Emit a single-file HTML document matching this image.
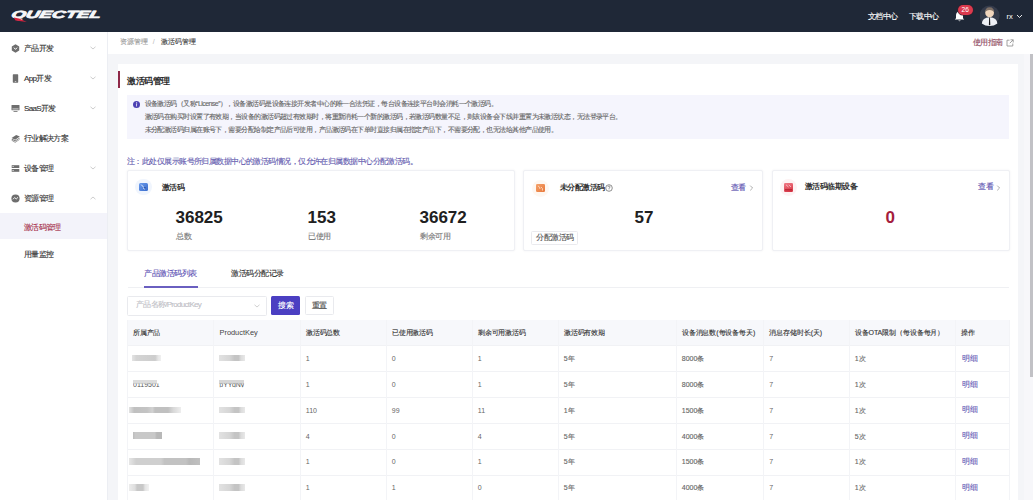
<!DOCTYPE html>
<html><head><meta charset="utf-8">
<style>
*{box-sizing:border-box;margin:0;padding:0}
html,body{width:1033px;height:500px;overflow:hidden}
body{position:relative;background:#f4f5f8;font-family:"Liberation Sans",sans-serif;color:#333;line-height:1}
.a{position:absolute}
.t{position:absolute;white-space:nowrap;line-height:1;transform:translateY(-50%)}
.c{-webkit-text-stroke:0.12px currentColor}
</style></head><body>
<div class="a" style="left:0px;top:0px;width:1033px;height:32px;background:#1f2837;"></div>
<svg class="a" style="left:0;top:0" width="120" height="32" viewBox="0 0 120 32">
  <g transform="translate(0,18.1) skewX(-14) translate(0,-18.1)">
  <text x="10.8" y="18.1" font-family="Liberation Sans" font-weight="bold" font-style="italic" font-size="10.4" textLength="89.5" lengthAdjust="spacingAndGlyphs" fill="#f6f7f9" stroke="#f6f7f9" stroke-width="0.75" stroke-linejoin="round">QUECTEL</text>
  </g>
  <path d="M13.8 17.4 L19 18.4 L26.8 21.9 L15.5 20.4 Z" fill="#d8243f"/>
</svg>
<div class="t c" style="left:867.5px;top:17.3px;color:#fff;font-size:8px;letter-spacing:-0.40px;">文档中心</div>
<div class="t c" style="left:908.5px;top:17.3px;color:#fff;font-size:8px;letter-spacing:-0.40px;">下载中心</div>
<svg class="a" style="left:953px;top:10px" width="13" height="13" viewBox="0 0 13 13">
  <path d="M6.5 1.5 C4 1.5 3 3.5 3 5.5 L3 8.2 L1.8 9.6 L11.2 9.6 L10 8.2 L10 5.5 C10 3.5 9 1.5 6.5 1.5Z" fill="#fff"/>
  <path d="M5.2 10.4 Q6.5 12 7.8 10.4Z" fill="#fff"/>
</svg>
<div class="a" style="left:957.6px;top:4.9px;width:15.2px;height:10px;background:#dc3a4e;border-radius:5px;box-shadow:0 0 0 0.6px #3a1e2a"></div>
<div class="t" style="left:961.6px;top:10.4px;color:#fff;font-size:6.6px;">26</div>
<svg class="a" style="left:980px;top:5px" width="20" height="21" viewBox="0 0 20 21">
  <circle cx="9.6" cy="10.5" r="10" fill="#343b4b"/>
  <path d="M1.8 18.5 Q2.2 12.8 9.6 12.2 Q17 12.8 17.4 18.5 Q14 21 9.6 21 Q5.2 21 1.8 18.5Z" fill="#eef0f5"/>
  <ellipse cx="9.6" cy="7.8" rx="4.4" ry="4.6" fill="#f1d6bd"/>
  <path d="M5.1 7.6 Q5 2.4 9.6 2.3 Q14.2 2.4 14.1 7.6 Q13.2 5 9.6 4.9 Q6 5 5.1 7.6Z" fill="#7d6f66"/>
  <path d="M9.2 12.6 L10 12.6 L10.3 19.4 L9.6 20.5 L8.9 19.4Z" fill="#15161a"/>
</svg>
<div class="t" style="left:1006.5px;top:16.5px;color:#fff;font-size:7.5px;">rx</div>
<svg class="a" style="left:1015.5px;top:14px" width="7" height="5" viewBox="0 0 7 5"><path d="M1 1 L3.5 3.5 L6 1" stroke="#fff" stroke-width="0.9" fill="none"/></svg>
<div class="a" style="left:0px;top:32px;width:107px;height:468px;background:#fff;"></div>
<div class="a" style="left:107px;top:32px;width:1px;height:468px;background:#eceef3;"></div>
<svg class="a" style="left:11px;top:43.5px" width="9" height="9" viewBox="0 0 9 9"><path d="M4.5 0.3 L8.2 2.4 L8.2 6.6 L4.5 8.7 L0.8 6.6 L0.8 2.4Z" fill="#6e6e6e"/><path d="M2.9 3.6 L4.5 5.4 L6.1 3.6" stroke="#fff" stroke-width="1" fill="none"/></svg>
<div class="t c" style="left:24px;top:48.8px;color:#333;font-size:8px;letter-spacing:-0.65px;">产品开发</div>
<svg class="a" style="left:89.5px;top:46px" width="6" height="4" viewBox="0 0 6 4"><path d="M0.5 0.8 L3 3 L5.5 0.8" stroke="#b8b8b8" stroke-width="0.7" fill="none"/></svg>
<svg class="a" style="left:11px;top:73.5px" width="9" height="9" viewBox="0 0 9 9"><rect x="1.8" y="0.3" width="5.4" height="8.4" rx="0.6" fill="#6e6e6e"/><rect x="3.8" y="7.2" width="1.4" height="0.6" fill="#fff"/></svg>
<div class="t c" style="left:24px;top:78.8px;color:#333;font-size:8px;letter-spacing:-0.65px;">App开发</div>
<svg class="a" style="left:89.5px;top:76px" width="6" height="4" viewBox="0 0 6 4"><path d="M0.5 0.8 L3 3 L5.5 0.8" stroke="#b8b8b8" stroke-width="0.7" fill="none"/></svg>
<svg class="a" style="left:11px;top:103.5px" width="9" height="9" viewBox="0 0 9 9"><rect x="0.5" y="1" width="8" height="5.2" rx="0.5" fill="#6e6e6e"/><rect x="1.4" y="4.6" width="6.2" height="0.7" fill="#fff"/><rect x="2.5" y="7" width="4" height="1" fill="#8a8a8a"/></svg>
<div class="t c" style="left:24px;top:108.8px;color:#333;font-size:8px;letter-spacing:-0.65px;">SaaS开发</div>
<svg class="a" style="left:89.5px;top:106px" width="6" height="4" viewBox="0 0 6 4"><path d="M0.5 0.8 L3 3 L5.5 0.8" stroke="#b8b8b8" stroke-width="0.7" fill="none"/></svg>
<svg class="a" style="left:11px;top:133.5px" width="9" height="9" viewBox="0 0 9 9"><path d="M0.6 4 L5.2 0.9 L8.8 2.6 L4.2 5.7Z" fill="#6e6e6e"/><path d="M0.4 5.2 L1.2 4.7 L4.2 6.5 L8.4 3.7 L9 4.1 L4.2 7.6Z" fill="#6e6e6e"/><path d="M0.4 6.6 L1.1 6.1 L4.2 7.9 L8.3 5.2 L8.9 5.6 L4.2 8.8Z" fill="#888"/></svg>
<div class="t c" style="left:24px;top:138.8px;color:#333;font-size:8px;letter-spacing:-0.65px;">行业解决方案</div>
<svg class="a" style="left:11px;top:163.5px" width="9" height="9" viewBox="0 0 9 9"><rect x="0.7" y="1.2" width="7.6" height="2.8" fill="#6e6e6e"/><rect x="0.7" y="5" width="7.6" height="2.8" fill="#6e6e6e"/><rect x="1.5" y="2.2" width="1.2" height="0.8" fill="#fff"/><rect x="1.5" y="6" width="1.2" height="0.8" fill="#fff"/></svg>
<div class="t c" style="left:24px;top:168.8px;color:#333;font-size:8px;letter-spacing:-0.65px;">设备管理</div>
<svg class="a" style="left:89.5px;top:166px" width="6" height="4" viewBox="0 0 6 4"><path d="M0.5 0.8 L3 3 L5.5 0.8" stroke="#b8b8b8" stroke-width="0.7" fill="none"/></svg>
<svg class="a" style="left:11px;top:193.5px" width="9" height="9" viewBox="0 0 9 9"><circle cx="4.5" cy="4.5" r="4.1" fill="#6e6e6e"/><path d="M2 5.3 L3.6 3.5 L5.2 5 L7 3.3" stroke="#fff" stroke-width="0.9" fill="none"/></svg>
<div class="t c" style="left:24px;top:198.8px;color:#333;font-size:8px;letter-spacing:-0.65px;">资源管理</div>
<svg class="a" style="left:89.5px;top:196px" width="6" height="4" viewBox="0 0 6 4"><path d="M0.5 3.2 L3 1 L5.5 3.2" stroke="#b8b8b8" stroke-width="0.7" fill="none"/></svg>
<div class="a" style="left:0px;top:213px;width:107px;height:26px;background:#f3f3fa;"></div>
<div class="t c" style="left:24px;top:227.8px;color:#a6304a;font-size:8px;letter-spacing:-0.65px;">激活码管理</div>
<div class="t c" style="left:24px;top:255.3px;color:#333;font-size:8px;letter-spacing:-0.65px;">用量监控</div>
<div class="a" style="left:108px;top:32px;width:925px;height:22px;background:#fff;"></div>
<div class="t c" style="left:119.7px;top:41.4px;color:#9a9a9a;font-size:7px;letter-spacing:0.00px;">资源管理</div>
<div class="t" style="left:152.8px;top:41.4px;color:#b5b5b5;font-size:7.0px;">/</div>
<div class="t c" style="left:161px;top:41.4px;color:#444;font-size:7px;letter-spacing:0.00px;">激活码管理</div>
<div class="t c" style="left:973px;top:42.6px;color:#8f4a62;font-size:8px;letter-spacing:-0.70px;">使用指南</div>
<svg class="a" style="left:1006px;top:38.5px" width="8" height="8" viewBox="0 0 8 8"><path d="M3.5 1.2 L1 1.2 L1 7 L6.8 7 L6.8 4.5" stroke="#8a8a8a" stroke-width="0.8" fill="none"/><path d="M4.5 0.8 L7.2 0.8 L7.2 3.5 M7.2 0.8 L3.8 4.2" stroke="#8a8a8a" stroke-width="0.8" fill="none"/></svg>
<div class="a" style="left:1024.2px;top:54px;width:8.8px;height:446px;background:#f7f7fa;"></div>
<div class="a" style="left:1030px;top:54px;width:3px;height:323px;background:#c1c1c5;"></div>
<div class="a" style="left:118px;top:64px;width:900.3px;height:440px;background:#fff;"></div>
<div class="a" style="left:118px;top:71px;width:2px;height:17px;background:#8e2848;"></div>
<div class="t" style="left:127px;top:80.5px;color:#2b2b2b;font-weight:bold;font-size:9px;letter-spacing:-0.40px;">激活码管理</div>
<div class="a" style="left:127px;top:95px;width:882px;height:44px;background:#f5f5fd;"></div>
<div class="a" style="left:133px;top:100.5px;width:7px;height:7px;border-radius:50%;background:#4d42b3"></div>
<svg class="a" style="left:133px;top:100.5px" width="7" height="7" viewBox="0 0 7 7"><circle cx="3.6" cy="1.9" r="0.6" fill="#fff"/><path d="M3.3 3 L4.1 3 L3.7 5.5 L3 5.5Z" fill="#fff"/></svg>
<div class="t c" style="left:144.5px;top:103.3px;color:#666;font-size:7px;letter-spacing:-0.55px;">设备激活码（又称“License”），设备激活码是设备连接开发者中心的唯一合法凭证，每台设备连接平台时会消耗一个激活码。</div>
<div class="t c" style="left:144.5px;top:116.1px;color:#666;font-size:7px;letter-spacing:-0.55px;">激活码在购买时设置了有效期，当设备的激活码超过有效期时，将重新消耗一个新的激活码，若激活码数量不足，则该设备会下线并重置为未激活状态，无法登录平台。</div>
<div class="t c" style="left:144.5px;top:128.8px;color:#666;font-size:7px;letter-spacing:-0.55px;">未分配激活码归属在账号下，需要分配给制定产品后可使用，产品激活码在下单时直接归属在指定产品下，不需要分配，也无法给其他产品使用。</div>
<div class="t c" style="left:127px;top:162px;color:#665db0;font-size:8px;letter-spacing:-0.56px;">注：此处仅展示账号所归属数据中心的激活码情况，仅允许在归属数据中心分配激活码。</div>
<div class="a" style="left:127px;top:170px;width:388px;height:81px;background:#fff;border:1px solid #eff0f4;border-radius:2px;box-shadow:0 0 2.5px rgba(20,30,60,0.06)"></div>
<div class="a" style="left:135.3px;top:178.7px;width:16.7px;height:16.7px;background:#f0f5fd;border-radius:50%"></div>
<div class="a" style="left:139.1px;top:182.9px;width:9px;height:8.6px;background:linear-gradient(135deg,#6a9bec,#3a6ccc);border-radius:1.5px"></div>
<svg class="a" style="left:139.1px;top:182.9px" width="9" height="8.6" viewBox="0 0 9 8.6"><path d="M2.2 1.6 L4.6 4.2 M4 4.8 L5.8 6.2" stroke="#dfe9fb" stroke-width="1" fill="none"/><circle cx="5.9" cy="4.8" r="0.7" fill="#1f3f8a"/></svg>
<div class="t" style="left:161.5px;top:187.7px;color:#333;font-weight:bold;font-size:8px;letter-spacing:-0.50px;">激活码</div>
<div class="t" style="left:175.5px;top:216.7px;color:#202020;font-weight:bold;font-size:17px;">36825</div>
<div class="t c" style="left:176px;top:236.6px;color:#777;font-size:8px;letter-spacing:-0.50px;">总数</div>
<div class="t" style="left:307.5px;top:216.7px;color:#202020;font-weight:bold;font-size:17px;">153</div>
<div class="t c" style="left:308px;top:236.6px;color:#777;font-size:8px;letter-spacing:-0.50px;">已使用</div>
<div class="t" style="left:419.5px;top:216.7px;color:#202020;font-weight:bold;font-size:17px;">36672</div>
<div class="t c" style="left:420px;top:236.6px;color:#777;font-size:8px;letter-spacing:-0.50px;">剩余可用</div>
<div class="a" style="left:523px;top:170px;width:239.5px;height:81px;background:#fff;border:1px solid #eff0f4;border-radius:2px;box-shadow:0 0 2.5px rgba(20,30,60,0.06)"></div>
<div class="a" style="left:532px;top:179.5px;width:17px;height:17px;background:#fef7f1;border-radius:50%"></div>
<div class="a" style="left:536.1px;top:183.5px;width:8.9px;height:8.5px;background:linear-gradient(135deg,#f5a26a,#e8773a);border-radius:1.2px"></div>
<svg class="a" style="left:536.1px;top:183.5px" width="9" height="8.5" viewBox="0 0 9 8.5"><path d="M2 2 Q4 2.5 4 5 M5 3 Q7 4 6.5 6.5" stroke="#fcd9bf" stroke-width="0.9" fill="none"/></svg>
<div class="t" style="left:559.5px;top:188.2px;color:#333;font-weight:bold;font-size:8px;letter-spacing:-0.50px;">未分配激活码</div>
<svg class="a" style="left:604.5px;top:184px" width="8" height="8" viewBox="0 0 8 8"><circle cx="4" cy="4" r="3.3" stroke="#555" stroke-width="0.65" fill="none"/><path d="M2.9 3.1 Q2.9 2 4 2 Q5.1 2 5.1 3 Q5.1 3.7 4 4.2 L4 4.9" stroke="#555" stroke-width="0.6" fill="none"/><circle cx="4" cy="5.8" r="0.35" fill="#666"/></svg>
<div class="t c" style="left:730.5px;top:188px;color:#5b50b0;font-size:8px;letter-spacing:-0.50px;">查看</div>
<svg class="a" style="left:748.5px;top:185px" width="5" height="6" viewBox="0 0 5 6"><path d="M1.2 0.6 L3.6 3 L1.2 5.4" stroke="#999" stroke-width="0.8" fill="none"/></svg>
<div class="t" style="left:634.5px;top:216.7px;color:#202020;font-weight:bold;font-size:17px;">57</div>
<div class="a" style="left:530.8px;top:231.2px;width:47px;height:14.2px;background:#fff;border:1px solid #eaeaee;border-radius:1.5px"></div>
<div class="t c" style="left:536px;top:238.4px;color:#555;font-size:8px;letter-spacing:-0.50px;">分配激活码</div>
<div class="a" style="left:771.5px;top:170px;width:238.5px;height:81px;background:#fff;border:1px solid #eff0f4;border-radius:2px;box-shadow:0 0 2.5px rgba(20,30,60,0.06)"></div>
<div class="a" style="left:779.8px;top:179px;width:17px;height:17px;background:#fdf2f3;border-radius:50%"></div>
<div class="a" style="left:783.8px;top:183.2px;width:9px;height:8.4px;background:linear-gradient(160deg,#f07a86,#d4303f);border-radius:1.2px"></div>
<svg class="a" style="left:783.8px;top:183.2px" width="9" height="8.4" viewBox="0 0 9 8.4"><path d="M2 1.8 L4.5 4 M5 1.8 L7 4" stroke="#fbd0d5" stroke-width="0.8" fill="none"/><rect x="1" y="6.2" width="7" height="1.2" fill="#b8202e"/></svg>
<div class="t" style="left:804.5px;top:187.2px;color:#333;font-weight:bold;font-size:8px;letter-spacing:-0.50px;">激活码临期设备</div>
<div class="t c" style="left:978px;top:187.4px;color:#5b50b0;font-size:8px;letter-spacing:-0.50px;">查看</div>
<svg class="a" style="left:996px;top:184.5px" width="5" height="6" viewBox="0 0 5 6"><path d="M1.2 0.6 L3.6 3 L1.2 5.4" stroke="#999" stroke-width="0.8" fill="none"/></svg>
<div class="t" style="left:885.5px;top:216.7px;color:#a51d3d;font-weight:bold;font-size:17px;">0</div>
<div class="a" style="left:127.5px;top:286.6px;width:881px;height:1px;background:#eff0f3;"></div>
<div class="t c" style="left:144px;top:273.8px;color:#5b50b3;font-size:8px;letter-spacing:-0.50px;">产品激活码列表</div>
<div class="a" style="left:144px;top:285.8px;width:53.5px;height:1.8px;background:#6a5fc0;"></div>
<div class="t c" style="left:231.3px;top:273.8px;color:#333;font-size:8px;letter-spacing:-0.50px;">激活码分配记录</div>
<div class="a" style="left:127.3px;top:296px;width:139.5px;height:19.5px;background:#fff;border:1px solid #e9eaee;border-radius:1.5px"></div>
<div class="t c" style="left:136px;top:304.6px;color:#c0c0c6;font-size:8px;letter-spacing:-0.70px;">产品名称/ProductKey</div>
<svg class="a" style="left:254px;top:303.5px" width="6" height="4" viewBox="0 0 6 4"><path d="M0.5 0.8 L3 3 L5.5 0.8" stroke="#bbb" stroke-width="0.7" fill="none"/></svg>
<div class="a" style="left:271px;top:296.3px;width:29px;height:19px;background:#4b3fc2;border-radius:1.5px"></div>
<div class="t c" style="left:278.3px;top:305.8px;color:#fff;font-size:8px;letter-spacing:-0.50px;">搜索</div>
<div class="a" style="left:304.5px;top:296.3px;width:29px;height:19px;background:#fff;border:1px solid #e9eaee;border-radius:1.5px"></div>
<div class="t c" style="left:311.5px;top:305.8px;color:#444;font-size:8px;letter-spacing:-0.50px;">重置</div>
<div class="a" style="left:127px;top:319.5px;width:882.5px;height:26.2px;background:#f7f8fb;"></div>
<div class="a" style="left:127px;top:345.2px;width:882.5px;height:1px;background:#f1f2f5;"></div>
<div class="a" style="left:127px;top:371.1px;width:882.5px;height:1px;background:#f1f2f5;"></div>
<div class="a" style="left:127px;top:397.0px;width:882.5px;height:1px;background:#f1f2f5;"></div>
<div class="a" style="left:127px;top:422.9px;width:882.5px;height:1px;background:#f1f2f5;"></div>
<div class="a" style="left:127px;top:448.8px;width:882.5px;height:1px;background:#f1f2f5;"></div>
<div class="a" style="left:127px;top:474.7px;width:882.5px;height:1px;background:#f1f2f5;"></div>
<div class="a" style="left:127px;top:500.6px;width:882.5px;height:1px;background:#f1f2f5;"></div>
<div class="a" style="left:126.5px;top:319.5px;width:1px;height:200px;background:#f3f4f7;"></div>
<div class="a" style="left:212.5px;top:319.5px;width:1px;height:200px;background:#f3f4f7;"></div>
<div class="a" style="left:299.5px;top:319.5px;width:1px;height:200px;background:#f3f4f7;"></div>
<div class="a" style="left:385.5px;top:319.5px;width:1px;height:200px;background:#f3f4f7;"></div>
<div class="a" style="left:471.5px;top:319.5px;width:1px;height:200px;background:#f3f4f7;"></div>
<div class="a" style="left:557.5px;top:319.5px;width:1px;height:200px;background:#f3f4f7;"></div>
<div class="a" style="left:675.5px;top:319.5px;width:1px;height:200px;background:#f3f4f7;"></div>
<div class="a" style="left:763.0px;top:319.5px;width:1px;height:200px;background:#f3f4f7;"></div>
<div class="a" style="left:848.5px;top:319.5px;width:1px;height:200px;background:#f3f4f7;"></div>
<div class="a" style="left:955.0px;top:319.5px;width:1px;height:200px;background:#f3f4f7;"></div>
<div class="a" style="left:1009.0px;top:319.5px;width:1px;height:200px;background:#f3f4f7;"></div>
<div class="t c" style="left:132.8px;top:331.8px;color:#333;font-size:7px;letter-spacing:-0.10px;">所属产品</div>
<div class="t" style="left:219.5px;top:333.0px;color:#444;font-size:7.4px;">ProductKey</div>
<div class="t c" style="left:305.8px;top:331.8px;color:#333;font-size:7px;letter-spacing:-0.10px;">激活码总数</div>
<div class="t c" style="left:391.8px;top:331.8px;color:#333;font-size:7px;letter-spacing:-0.10px;">已使用激活码</div>
<div class="t c" style="left:477.8px;top:331.8px;color:#333;font-size:7px;letter-spacing:-0.10px;">剩余可用激活码</div>
<div class="t c" style="left:563.8px;top:331.8px;color:#333;font-size:7px;letter-spacing:-0.10px;">激活码有效期</div>
<div class="t c" style="left:681.8px;top:331.8px;color:#333;font-size:7px;letter-spacing:-0.10px;">设备消息数(每设备每天)</div>
<div class="t c" style="left:769.3px;top:331.8px;color:#333;font-size:7px;letter-spacing:-0.10px;">消息存储时长(天)</div>
<div class="t c" style="left:854.8px;top:331.8px;color:#333;font-size:7px;letter-spacing:-0.10px;">设备OTA限制（每设备每月）</div>
<div class="t c" style="left:961.3px;top:331.8px;color:#333;font-size:7px;letter-spacing:-0.10px;">操作</div>
<div class="t" style="left:305.8px;top:357.8px;color:#666;font-size:7.0px;">1</div>
<div class="t" style="left:391.8px;top:357.8px;color:#666;font-size:7.0px;">0</div>
<div class="t" style="left:477.8px;top:357.8px;color:#666;font-size:7.0px;">1</div>
<div class="t c" style="left:563.8px;top:357.8px;color:#666;font-size:7px;letter-spacing:0.00px;">5年</div>
<div class="t c" style="left:681.8px;top:357.8px;color:#666;font-size:7px;letter-spacing:0.00px;">8000条</div>
<div class="t" style="left:769.3px;top:357.8px;color:#666;font-size:7.0px;">7</div>
<div class="t c" style="left:854.8px;top:357.8px;color:#666;font-size:7px;letter-spacing:0.00px;">1次</div>
<div class="t c" style="left:962.3px;top:358.6px;color:#6a5fb8;font-size:8px;letter-spacing:-0.40px;">明细</div>
<div class="t" style="left:305.8px;top:383.7px;color:#666;font-size:7.0px;">1</div>
<div class="t" style="left:391.8px;top:383.7px;color:#666;font-size:7.0px;">0</div>
<div class="t" style="left:477.8px;top:383.7px;color:#666;font-size:7.0px;">1</div>
<div class="t c" style="left:563.8px;top:383.7px;color:#666;font-size:7px;letter-spacing:0.00px;">5年</div>
<div class="t c" style="left:681.8px;top:383.7px;color:#666;font-size:7px;letter-spacing:0.00px;">8000条</div>
<div class="t" style="left:769.3px;top:383.7px;color:#666;font-size:7.0px;">7</div>
<div class="t c" style="left:854.8px;top:383.7px;color:#666;font-size:7px;letter-spacing:0.00px;">1次</div>
<div class="t c" style="left:962.3px;top:384.5px;color:#6a5fb8;font-size:8px;letter-spacing:-0.40px;">明细</div>
<div class="t" style="left:305.8px;top:409.6px;color:#666;font-size:7.0px;">110</div>
<div class="t" style="left:391.8px;top:409.6px;color:#666;font-size:7.0px;">99</div>
<div class="t" style="left:477.8px;top:409.6px;color:#666;font-size:7.0px;">11</div>
<div class="t c" style="left:563.8px;top:409.6px;color:#666;font-size:7px;letter-spacing:0.00px;">1年</div>
<div class="t c" style="left:681.8px;top:409.6px;color:#666;font-size:7px;letter-spacing:0.00px;">1500条</div>
<div class="t" style="left:769.3px;top:409.6px;color:#666;font-size:7.0px;">7</div>
<div class="t c" style="left:854.8px;top:409.6px;color:#666;font-size:7px;letter-spacing:0.00px;">1次</div>
<div class="t c" style="left:962.3px;top:410.4px;color:#6a5fb8;font-size:8px;letter-spacing:-0.40px;">明细</div>
<div class="t" style="left:305.8px;top:435.5px;color:#666;font-size:7.0px;">4</div>
<div class="t" style="left:391.8px;top:435.5px;color:#666;font-size:7.0px;">0</div>
<div class="t" style="left:477.8px;top:435.5px;color:#666;font-size:7.0px;">4</div>
<div class="t c" style="left:563.8px;top:435.5px;color:#666;font-size:7px;letter-spacing:0.00px;">5年</div>
<div class="t c" style="left:681.8px;top:435.5px;color:#666;font-size:7px;letter-spacing:0.00px;">4000条</div>
<div class="t" style="left:769.3px;top:435.5px;color:#666;font-size:7.0px;">7</div>
<div class="t c" style="left:854.8px;top:435.5px;color:#666;font-size:7px;letter-spacing:0.00px;">5次</div>
<div class="t c" style="left:962.3px;top:436.3px;color:#6a5fb8;font-size:8px;letter-spacing:-0.40px;">明细</div>
<div class="t" style="left:305.8px;top:461.4px;color:#666;font-size:7.0px;">1</div>
<div class="t" style="left:391.8px;top:461.4px;color:#666;font-size:7.0px;">0</div>
<div class="t" style="left:477.8px;top:461.4px;color:#666;font-size:7.0px;">1</div>
<div class="t c" style="left:563.8px;top:461.4px;color:#666;font-size:7px;letter-spacing:0.00px;">5年</div>
<div class="t c" style="left:681.8px;top:461.4px;color:#666;font-size:7px;letter-spacing:0.00px;">1500条</div>
<div class="t" style="left:769.3px;top:461.4px;color:#666;font-size:7.0px;">7</div>
<div class="t c" style="left:854.8px;top:461.4px;color:#666;font-size:7px;letter-spacing:0.00px;">1次</div>
<div class="t c" style="left:962.3px;top:462.2px;color:#6a5fb8;font-size:8px;letter-spacing:-0.40px;">明细</div>
<div class="t" style="left:305.8px;top:487.3px;color:#666;font-size:7.0px;">1</div>
<div class="t" style="left:391.8px;top:487.3px;color:#666;font-size:7.0px;">1</div>
<div class="t" style="left:477.8px;top:487.3px;color:#666;font-size:7.0px;">0</div>
<div class="t c" style="left:563.8px;top:487.3px;color:#666;font-size:7px;letter-spacing:0.00px;">5年</div>
<div class="t c" style="left:681.8px;top:487.3px;color:#666;font-size:7px;letter-spacing:0.00px;">4000条</div>
<div class="t" style="left:769.3px;top:487.3px;color:#666;font-size:7.0px;">7</div>
<div class="t c" style="left:854.8px;top:487.3px;color:#666;font-size:7px;letter-spacing:0.00px;">1次</div>
<div class="t c" style="left:962.3px;top:488.1px;color:#6a5fb8;font-size:8px;letter-spacing:-0.40px;">明细</div>
<div class="a" style="left:132px;top:354.7px;width:28.5px;height:6.4px;background:linear-gradient(90deg,#e4e4e4 0%,#d4d4d4 15%,#cdcdcd 80%,#e6e6e6 90%,#f0f0f0 100%);filter:blur(0.5px)"></div>
<div class="a" style="left:219.3px;top:354.7px;width:25.9px;height:6.4px;background:linear-gradient(90deg,#e2e2e2 0%,#d6d6d6 40%,#c4c4c4 60%,#c4c4c4 75%,#dcdcdc 85%,#e8e8e8 100%);filter:blur(0.5px)"></div>
<div class="a" style="left:132.5px;top:380.2px;width:24px;height:3.6px;background:#dcdcdc;filter:blur(0.5px)"></div>
<div class="t" style="left:133px;top:383.8px;color:#555;font-size:7.0px;clip-path:inset(45% 0 0 0)">0119501</div>
<div class="a" style="left:219.3px;top:380.2px;width:25px;height:3.6px;background:#d6d6d6;filter:blur(0.5px)"></div>
<div class="t" style="left:219.3px;top:383.8px;color:#555;font-size:7.0px;clip-path:inset(45% 0 0 0)">pYYqNy</div>
<div class="a" style="left:129.3px;top:406.6px;width:51.7px;height:6.4px;background:linear-gradient(90deg,#e2e2e2 0%,#c0c0c0 10%,#c4c4c4 35%,#d2d2d2 45%,#c0c0c0 50%,#c0c0c0 75%,#d8d8d8 85%,#eeeeee 100%);filter:blur(0.5px)"></div>
<div class="a" style="left:219.3px;top:406.6px;width:25.9px;height:6.4px;background:linear-gradient(90deg,#e2e2e2 0%,#d6d6d6 40%,#c4c4c4 60%,#c4c4c4 75%,#dcdcdc 85%,#e8e8e8 100%);filter:blur(0.5px)"></div>
<div class="a" style="left:133px;top:432.4px;width:28.5px;height:6.4px;background:linear-gradient(90deg,#bdbdbd 0%,#c8c8c8 8%,#c8c8c8 75%,#b8b8b8 82%,#b8b8b8 100%);filter:blur(0.5px)"></div>
<div class="a" style="left:219.3px;top:432.4px;width:25.9px;height:6.4px;background:linear-gradient(90deg,#e2e2e2 0%,#d6d6d6 40%,#c4c4c4 60%,#c4c4c4 75%,#dcdcdc 85%,#e8e8e8 100%);filter:blur(0.5px)"></div>
<div class="a" style="left:129px;top:458.3px;width:71px;height:6.4px;background:linear-gradient(90deg,#e6e6e6 0%,#cfcfcf 10%,#cfcfcf 45%,#c2c2c2 50%,#c2c2c2 80%,#b8b8b8 85%,#c0c0c0 100%);filter:blur(0.5px)"></div>
<div class="a" style="left:219.3px;top:458.3px;width:25.9px;height:6.4px;background:linear-gradient(90deg,#e2e2e2 0%,#d6d6d6 40%,#c4c4c4 60%,#c4c4c4 75%,#dcdcdc 85%,#e8e8e8 100%);filter:blur(0.5px)"></div>
<div class="a" style="left:129px;top:484.2px;width:20px;height:6.4px;background:linear-gradient(90deg,#ececec 0%,#dedede 30%,#c8c8c8 40%,#c8c8c8 70%,#e4e4e4 80%,#f2f2f2 100%);filter:blur(0.5px)"></div>
<div class="a" style="left:219.3px;top:484.2px;width:25.9px;height:6.4px;background:linear-gradient(90deg,#e2e2e2 0%,#d6d6d6 40%,#c4c4c4 60%,#c4c4c4 75%,#dcdcdc 85%,#e8e8e8 100%);filter:blur(0.5px)"></div>
</body></html>
